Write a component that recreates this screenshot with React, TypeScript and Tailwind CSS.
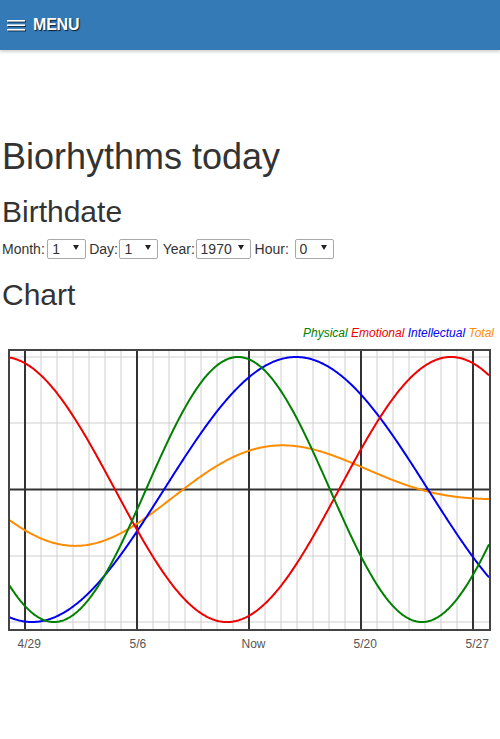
import React from "react";

const X0 = 9;
const X1 = 489;
const NOW = 249;
const PX = 16;
const YC = 488.5;
const AMP = 132.5;

const phys = (d: number) => Math.cos((2 * Math.PI * (d + 0.6875)) / 23);
const emo = (d: number) => Math.cos((2 * Math.PI * (d - 12.625)) / 28);
const intel = (d: number) => Math.cos((2 * Math.PI * (d - 2.94)) / 33);
const total = (d: number) => (phys(d) + emo(d) + intel(d)) / 3;

function pathFor(f: (d: number) => number) {
  const pts: string[] = [];
  for (let x = X0; x <= X1; x += 1) {
    const d = (x - NOW) / PX;
    const y = YC - AMP * f(d);
    pts.push(`${x === X0 ? "M" : "L"}${x},${y.toFixed(2)}`);
  }
  return pts.join(" ");
}

function Select({ value, width }: { value: string; width: string }) {
  return (
    <span className="relative inline-block">
      <select
        defaultValue={value}
        className={`appearance-none block h-5 ${width} rounded-[2px] border border-[#a9a9a9] bg-white pl-[4px] pr-4 text-[14px] leading-[18px] text-[#333] outline-none`}
      >
        <option value={value}>{value}</option>
      </select>
      <svg
        className="pointer-events-none absolute right-[7px] top-[6px]"
        width="6"
        height="5"
        viewBox="0 0 6 5"
      >
        <polygon points="0,0 6,0 3,5" fill="#222" />
      </svg>
    </span>
  );
}

export default function App() {
  const minorX: number[] = [];
  for (let x = X0 + PX; x < X1; x += PX) minorX.push(x);
  const majors = [
    { x: 25, label: "4/29" },
    { x: 137, label: "5/6" },
    { x: 249, label: "Now" },
    { x: 361, label: "5/20" },
    { x: 473, label: "5/27" },
  ];
  const hLines = [356, 422, 555, 621];

  return (
    <div className="min-h-screen bg-white font-['Liberation_Sans',Arial,sans-serif] text-[#333]">
      <header className="flex h-[50px] items-center bg-[#337ab7] shadow-[0_2px_3px_rgba(0,0,0,0.18)]">
        <svg
          className="ml-[7px] drop-shadow-[1px_1px_0.5px_rgba(0,0,0,0.6)]"
          width="18"
          height="11"
          viewBox="0 0 18 11"
        >
          <rect x="0" y="0" width="18" height="1.6" fill="#fff" />
          <rect x="0" y="4.4" width="18" height="1.6" fill="#fff" />
          <rect x="0" y="8.9" width="18" height="1.6" fill="#fff" />
        </svg>
        <span className="ml-[8px] text-[16px] font-bold leading-none tracking-[-0.2px] text-white [text-shadow:1px_1px_1px_rgba(0,0,0,0.75)]">
          MENU
        </span>
      </header>

      <main>
        <h1 className="mt-[86.5px] pl-[2px] text-[36px] font-normal leading-[40px]">
          Biorhythms today
        </h1>
        <h2 className="mt-[18px] pl-[2px] text-[30px] font-normal leading-[34px]">
          Birthdate
        </h2>
        <div className="mt-[11px] flex h-5 items-center pl-[1px] text-[14px]">
          <span className="ml-[1px]">Month:</span>
          <span className="ml-[2.4px]">
            <Select value="1" width="w-[39px]" />
          </span>
          <span className="ml-[3px]">Day:</span>
          <span className="ml-[1.4px]">
            <Select value="1" width="w-[39px]" />
          </span>
          <span className="ml-[4.3px]">Year:</span>
          <span className="ml-[0.7px]">
            <Select value="1970" width="w-[55px]" />
          </span>
          <span className="ml-[4px]">Hour:</span>
          <span className="ml-[5.8px]">
            <Select value="0" width="w-[39px]" />
          </span>
        </div>
        <h2 className="mt-[18px] pl-[2px] text-[30px] font-normal leading-[34px]">
          Chart
        </h2>
        <div className="mt-[13px] h-4 pr-[6px] text-right text-[12px] italic leading-4">
          <span className="text-[#008000]">Physical</span>{" "}
          <span className="text-[#ee0000]">Emotional</span>{" "}
          <span className="text-[#0000ee]">Intellectual</span>{" "}
          <span className="text-[#ff8c00]">Total</span>
        </div>
        <svg
          className="block"
          width="500"
          height="320"
          viewBox="0 340 500 320"
        >
          <defs>
            <clipPath id="frame">
              <rect x={X0} y={349} width={X1 - X0} height={280} />
            </clipPath>
          </defs>
          {minorX.map((x) => (
            <line
              key={x}
              x1={x}
              x2={x}
              y1={349}
              y2={629}
              stroke="#cfcfcf"
              strokeWidth="1"
            />
          ))}
          {hLines.map((y) => (
            <line
              key={y}
              x1={X0}
              x2={X1}
              y1={y}
              y2={y}
              stroke="#cfcfcf"
              strokeWidth="1"
            />
          ))}
          {majors.map((m) => (
            <line
              key={m.x}
              x1={m.x}
              x2={m.x}
              y1={349}
              y2={629}
              stroke="#333"
              strokeWidth="2"
            />
          ))}
          <line x1={X0} x2={X1} y1={488.5} y2={488.5} stroke="#333" strokeWidth="2" />
          <g clipPath="url(#frame)" fill="none" strokeWidth="2">
            <path d={pathFor(total)} stroke="#ff8c00" />
            <path d={pathFor(intel)} stroke="#0000ee" />
            <path d={pathFor(emo)} stroke="#ee0000" />
            <path d={pathFor(phys)} stroke="#008000" />
          </g>
          <rect
            x={X0}
            y={349}
            width={X1 - X0 + 1}
            height={280}
            fill="none"
            stroke="#444"
            strokeWidth="2"
          />
          {majors.map((m) => (
            <text
              key={m.label}
              x={m.x - 7.5}
              y={647}
              fontSize="12"
              fill="#555"
              fontFamily="Liberation Sans, Arial, sans-serif"
            >
              {m.label}
            </text>
          ))}
        </svg>
      </main>
    </div>
  );
}
